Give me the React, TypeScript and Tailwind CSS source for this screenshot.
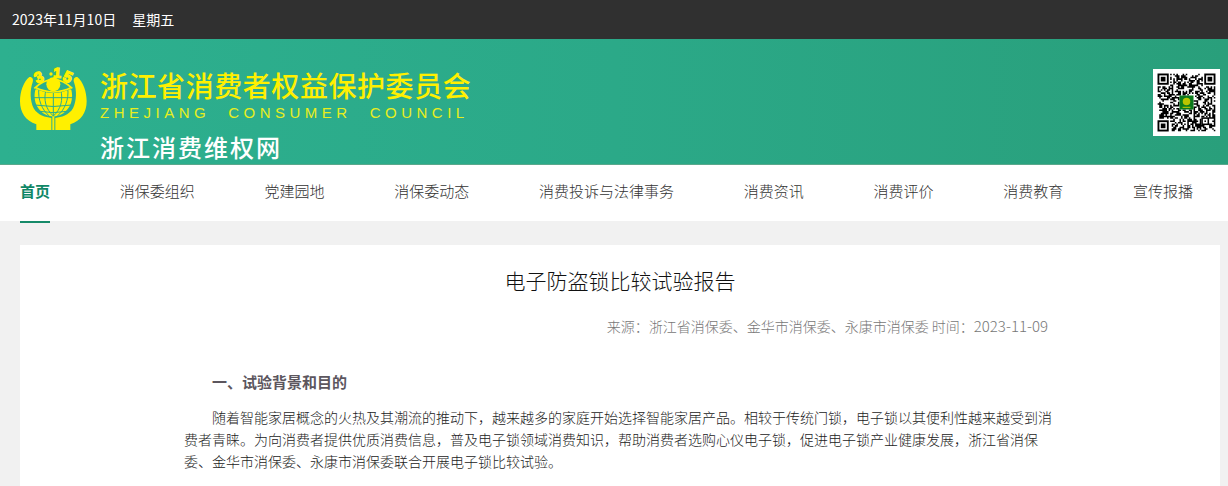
import React from "react";

const navItems = [
  "首页",
  "消保委组织",
  "党建园地",
  "消保委动态",
  "消费投诉与法律事务",
  "消费资讯",
  "消费评价",
  "消费教育",
  "宣传报播",
];

const QR_SIZE = 37;

function inFinder(x: number, y: number) {
  const far = QR_SIZE - 8;
  return (x < 8 && y < 8) || (x >= far && y < 8) || (x < 8 && y >= far);
}

// Fills the data area of the code with a fixed pseudo random pattern
function buildQrPath() {
  let seed = 315;
  let d = "";
  for (let y = 0; y < QR_SIZE; y++) {
    for (let x = 0; x < QR_SIZE; x++) {
      seed = (seed * 1103515245 + 12345) % 2147483648;
      const inLogo = x > 13 && x < 23 && y > 13 && y < 23;
      const inAlign = x > 27 && x < 33 && y > 27 && y < 33;
      if (inFinder(x, y) || inLogo || inAlign) continue;
      if (seed / 2147483648 > 0.45) d += `M${x} ${y}h1v1h-1z`;
    }
  }
  return d;
}

const qrPath = buildQrPath();

function Finder({ x, y }: { x: number; y: number }) {
  return (
    <>
      <rect x={x + 0.5} y={y + 0.5} width="6" height="6" fill="none" stroke="#000" strokeWidth="1.2" />
      <rect x={x + 2} y={y + 2} width="3" height="3" />
    </>
  );
}

function QrCode() {
  return (
    <svg viewBox="-3 -3 43 43" className="block h-[67px] w-[67px] bg-white" role="img" aria-label="二维码">
      <path d={qrPath} />
      <Finder x={0} y={0} />
      <Finder x={30} y={0} />
      <Finder x={0} y={30} />
      <rect x="28.5" y="28.5" width="4" height="4" fill="none" stroke="#000" />
      <rect x="30" y="30" width="1" height="1" />
      <rect x="14" y="14" width="9" height="9" fill="#0b7a1c" />
      <circle cx="18.5" cy="17.8" r="2.4" fill="#b9c400" />
      <path d="M16 21.6h5" stroke="#b9c400" strokeWidth="0.7" />
    </svg>
  );
}

function Logo() {
  return (
    <svg
      viewBox="31 30 201 201"
      className="block h-[67px] w-[67px] overflow-visible"
      fill="#fff000"
      role="img"
      aria-label="3·15"
    >
      {/* Hands */}
      <path d="M59 66C68 65 72 73 69 82C60 106 61 139 72 160C84 181 108 187 125 189V225H80V208C48 198 31 172 31 139C31 111 41 81 59 66Z" />
      <path d="M203 66C194 65 190 73 193 82C202 106 201 139 190 160C178 181 154 187 137 189V225H182V208C214 198 231 172 231 139C231 111 221 81 203 66Z" />
      <path d="M128 180h6v45h-6z" />
      {/* Globe */}
      <path d="M77 104C66 148 96 184 131 184C166 184 196 148 185 104C170 95 158 108 131 113C104 108 92 95 77 104Z" />
      <g fill="none" stroke="#2cae8d" strokeWidth="3">
        <path d="M131 110V184M109 103C101 135 108 162 131 183M153 103C161 135 154 162 131 183M88 98C83 134 98 166 119 183M174 98C179 134 164 166 143 183" />
        <path d="M70 128H192M75 150Q131 159 187 150M91 169Q131 177 171 169" />
      </g>
      {/* Eye */}
      <path d="M73 98Q131 40 189 98Q160 114 131 114Q102 114 73 98Z" fill="#2cae8d" />
      <path d="M74 100Q131 48 188 100M76 97Q101 110 131 111Q161 110 186 97" fill="none" stroke="#fff000" strokeWidth="5" />
      <circle cx="131" cy="88" r="21" />
      {/* Date mark over the eye */}
      <g fontFamily="'Liberation Sans', sans-serif" fontWeight="bold" stroke="#fff000" strokeWidth="4">
        <text fontSize="46" transform="translate(82 86) rotate(-24)">3</text>
        <text fontSize="42" transform="translate(130 67) rotate(4)">1</text>
        <text fontSize="46" transform="translate(156 75) rotate(24)">5</text>
      </g>
      <circle cx="124" cy="57" r="5" />
    </svg>
  );
}

export default function App() {
  return (
    <div
      className="flex min-h-screen flex-col bg-[#f1f1f1]"
      style={{ fontFamily: "'Noto Sans CJK SC', sans-serif" }}
    >
      {/* Date bar */}
      <div className="flex h-[39px] items-center gap-4 bg-[#303030] px-3 pb-0.5 text-sm text-white">
        <span>2023年11月10日</span>
        <span>星期五</span>
      </div>

      {/* Banner */}
      <header className="flex h-[126px] items-start justify-between border-b border-[#5aa88c] bg-linear-to-r from-[#2db08f] via-[#2ba988] to-[#299f7b] pl-5 pr-2">
        <div className="flex gap-[13px] pt-[26px]">
          <Logo />
          <div className="flex flex-col">
            <h1 className="text-[28px] leading-10 font-medium tracking-[0.02em] text-[#fff000]">
              浙江省消费者权益保护委员会
            </h1>
            <p
              className="flex gap-[18px] text-[15px] leading-4 tracking-[0.3em] text-[#e9ee1c]"
              style={{ fontFamily: "'Liberation Sans', sans-serif" }}
            >
              <span>ZHEJIANG</span>
              <span>CONSUMER</span>
              <span>COUNCIL</span>
            </p>
            <p className="pt-2.5 text-2xl font-medium tracking-[2px] text-white">浙江消费维权网</p>
          </div>
        </div>
        <div className="pt-[30px]">
          <QrCode />
        </div>
      </header>

      {/* Navigation */}
      <nav className="flex h-14 justify-between bg-white pl-5 pr-[35px] text-[15px] leading-[52px] whitespace-nowrap">
        {navItems.map((item, i) => (
          <a
            key={item}
            href="#"
            className={
              i === 0
                ? "h-[58px] border-b-2 border-[#168a69] font-bold text-[#0f8766]"
                : "font-light text-[#333]"
            }
          >
            {item}
          </a>
        ))}
      </nav>

      {/* Article */}
      <main className="flex flex-1 flex-col pt-6 pl-5 pr-2">
        <article className="flex-1 bg-white">
          <div className="mx-auto max-w-[872px] pt-[19px]">
            <h2 className="text-center text-[21px] leading-8 font-light text-[#111]">
              电子防盗锁比较试验报告
            </h2>
            <p className="pt-5 pr-2 text-right text-sm leading-5 font-light text-[#777]">
              来源：浙江省消保委、金华市消保委、永康市消保委 时间：
              <span className="text-[15px]">2023-11-09</span>
            </p>
            <h3 className="pt-[35px] indent-7 text-[15px] leading-[22px] font-bold text-[#5c565e]">
              一、试验背景和目的
            </h3>
            <p className="pt-[13px] indent-7 text-sm leading-[22px] font-light text-[#222]">
              随着智能家居概念的火热及其潮流的推动下，越来越多的家庭开始选择智能家居产品。相较于传统门锁，电子锁以其便利性越来越受到消费者青睐。为向消费者提供优质消费信息，普及电子锁领域消费知识，帮助消费者选购心仪电子锁，促进电子锁产业健康发展，浙江省消保委、金华市消保委、永康市消保委联合开展电子锁比较试验。
            </p>
          </div>
        </article>
      </main>
    </div>
  );
}
